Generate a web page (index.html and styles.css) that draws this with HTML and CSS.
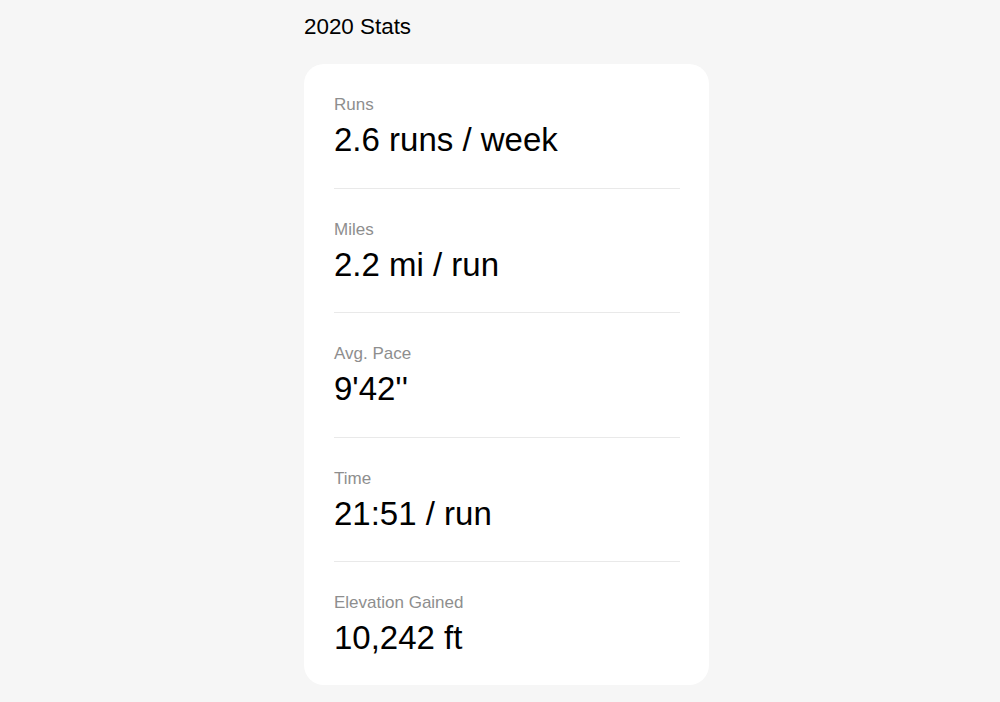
FILE: index.html
```html
<!DOCTYPE html>
<html lang="en">
<head>
<meta charset="utf-8">
<title>2020 Stats</title>
<link rel="stylesheet" href="styles.css">
</head>
<body>
<main class="page">
  <section class="stats">
    <h1 class="title">2020 Stats</h1>
    <div class="card">
      <div class="row">
        <div class="label">Runs</div>
        <div class="value">2.6 runs / week</div>
      </div>
      <div class="row">
        <div class="label">Miles</div>
        <div class="value">2.2 mi / run</div>
      </div>
      <div class="row">
        <div class="label">Avg. Pace</div>
        <div class="value">9'42''</div>
      </div>
      <div class="row">
        <div class="label">Time</div>
        <div class="value">21:51 / run</div>
      </div>
      <div class="row">
        <div class="label">Elevation Gained</div>
        <div class="value">10,242 ft</div>
      </div>
    </div>
  </section>
</main>
</body>
</html>
```
FILE: styles.css
```css
html, body {
  margin: 0;
  padding: 0;
  background: #f6f6f6;
}
body {
  font-family: "Liberation Sans", Arial, Helvetica, sans-serif;
  color: #000;
}
.page {
  display: flex;
  justify-content: center;
  padding: 14px 0 0 13px;
}
.stats {
  width: 405px;
}
.title {
  margin: 0 0 24px;
  font-size: 22.4px;
  line-height: 26px;
  font-weight: 400;
}
.card {
  background: #fff;
  border-radius: 20px;
  padding: 0 29px 0 30px;
}
.row {
  padding: 31px 0 27.5px;
  border-bottom: 1px solid #e9e9e9;
}
.row:last-child {
  border-bottom: none;
  padding-bottom: 27px;
}
.label {
  font-size: 17px;
  line-height: 20px;
  color: #8e8e8e;
}
.value {
  margin-top: 5px;
  font-size: 33px;
  line-height: 40px;
}
```
